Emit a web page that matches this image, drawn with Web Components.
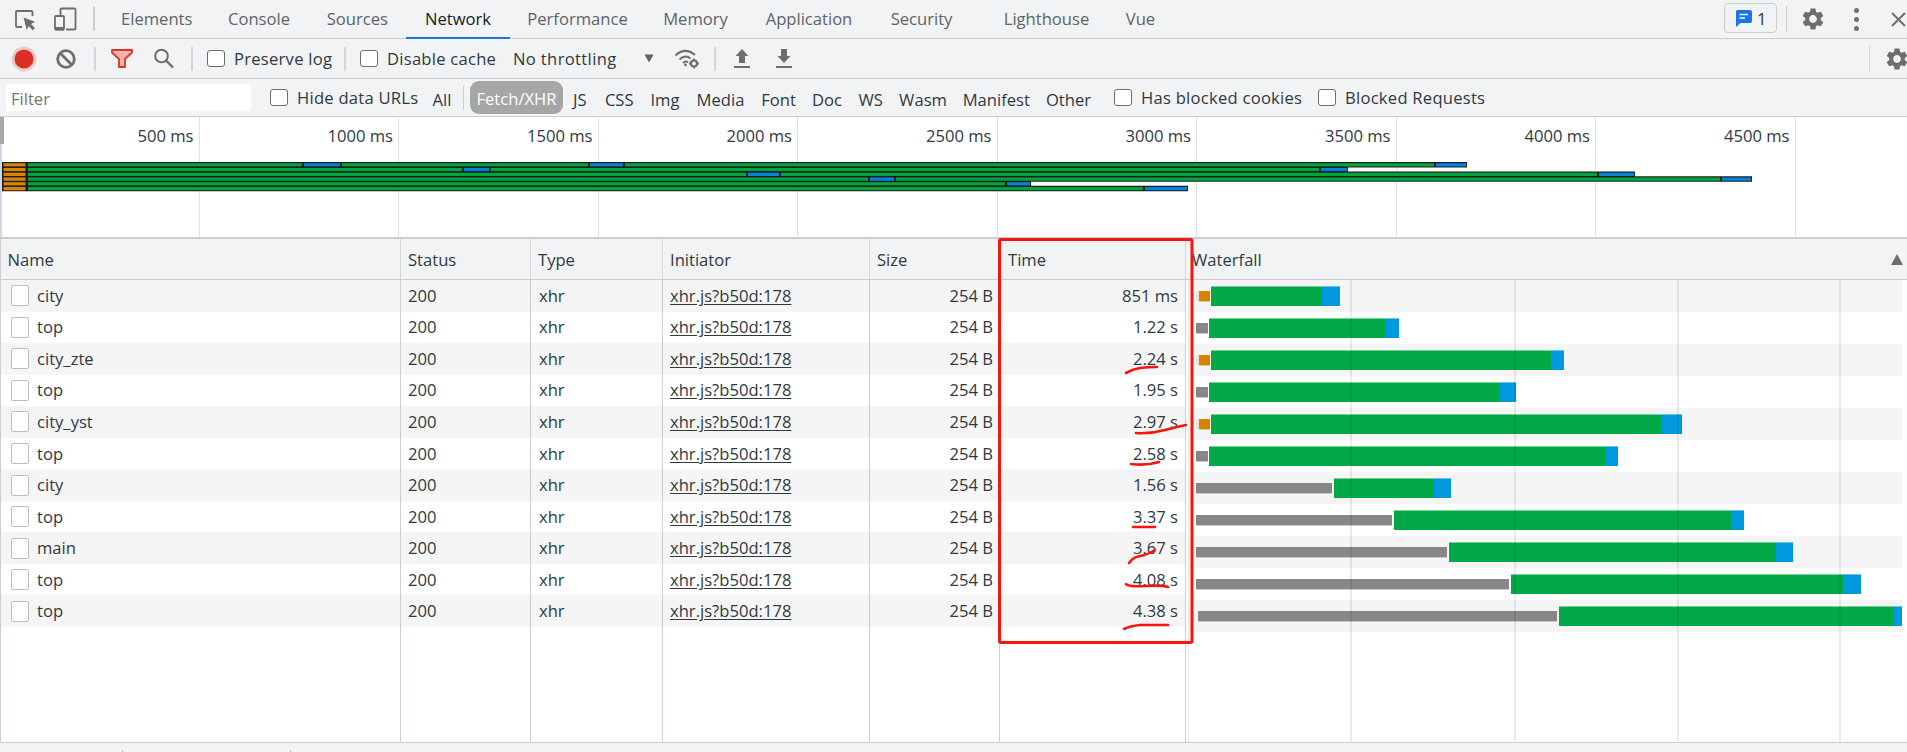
<!DOCTYPE html>
<html lang="en">
<head>
<meta charset="utf-8">
<title>Network</title>
<style>
  html, body { margin:0; height:100%; }
  body {
    width:1907px; height:752px; overflow:hidden; position:relative; background:#fff;
    display:flex; flex-direction:column;
    font-family:"Open Sans", "Noto Sans", Arial, sans-serif; font-size:16.6px; color:#303942;
  }
</style>
</head>
<body>
<dt-tabbar></dt-tabbar>
<dt-toolbar></dt-toolbar>
<dt-filterbar></dt-filterbar>
<dt-overview></dt-overview>
<net-table></net-table>
<dt-statusbar></dt-statusbar>
<dt-annotations></dt-annotations>

<script>
const GEAR = `<svg width="26" height="26" viewBox="0 0 24 24" fill="#6e6e6e"><path fill-rule="evenodd" d="M19.14 12.94c.04-.3.06-.61.06-.94 0-.32-.02-.64-.07-.94l2.03-1.58a.49.49 0 0 0 .12-.61l-1.92-3.32a.488.488 0 0 0-.59-.22l-2.39.96c-.5-.38-1.03-.7-1.62-.94l-.36-2.54a.484.484 0 0 0-.48-.41h-3.84c-.24 0-.43.17-.47.41l-.36 2.54c-.59.24-1.13.57-1.62.94l-2.39-.96c-.22-.08-.47 0-.59.22L2.74 8.87c-.12.21-.08.47.12.61l2.03 1.58c-.05.3-.09.63-.09.94s.02.64.07.94l-2.03 1.58a.49.49 0 0 0-.12.61l1.92 3.32c.12.22.37.29.59.22l2.39-.96c.5.38 1.03.7 1.62.94l.36 2.54c.05.24.24.41.48.41h3.84c.24 0 .44-.17.47-.41l.36-2.54c.59-.24 1.13-.56 1.62-.94l2.39.96c.22.08.47 0 .59-.22l1.92-3.32c.12-.22.07-.47-.12-.61l-2.01-1.58zM12 15.6c-1.98 0-3.6-1.62-3.6-3.6s1.62-3.6 3.6-3.6 3.6 1.62 3.6 3.6-1.62 3.6-3.6 3.6z"/></svg>`;

class DtCheck extends HTMLElement {
  constructor() {
    super();
    this.attachShadow({ mode: "open" }).innerHTML = `
      <style>
        :host { display:flex; align-items:center; gap:9.5px; white-space:nowrap; letter-spacing:.25px; }
        .box { width:15.5px; height:15.5px; border:1.5px solid #6e6e6e; border-radius:3px; background:#fff; flex:none; }
      </style>
      <span class="box"></span><slot></slot>`;
  }
}

class DtTabbar extends HTMLElement {
  constructor() {
    super();
    const tabs = [["Elements",105.5],["Console",99],["Sources",97.5],["Network",104],["Performance",135],["Memory",101],["Application",126],["Security",99],["Lighthouse",123,14],["Vue",65]];
    this.attachShadow({ mode: "open" }).innerHTML = `
      <style>
        :host { display:flex; align-items:stretch; height:38px; background:#f1f3f4; border-bottom:1px solid #cacdd1; flex:none; color:#5f6368; }
        .ic { display:block; flex:none; align-self:center; }
        .sep { width:2px; height:24px; background:#cacdd1; align-self:center; flex:none; }
        .tab { display:flex; align-items:center; justify-content:center; flex:none; box-sizing:border-box; height:38px; padding-bottom:2px; white-space:nowrap; }
        .tab.on { color:#202124; border-bottom:2px solid #1a73e8; height:39px; padding-bottom:1px; }
        .badge { margin-left:auto; align-self:center; margin-top:-2px; width:53px; height:30px; box-sizing:border-box; border:1px solid #cacdd1; border-radius:4px; display:flex; align-items:center; gap:5px; padding-left:10px; }
        .dots { width:5px; display:flex; flex-direction:column; gap:4px; margin-left:28px; align-self:center; }
        .dots i { width:5px; height:5px; border-radius:50%; background:#6e6e6e; }
      </style>
      <svg class="ic" style="margin-left:13px" width="24" height="26" viewBox="13 5 24 26">
        <path d="M22 26H17Q16 26 16 25V11Q16 10 17 10H31.5Q32.5 10 32.5 11V15" fill="none" stroke="#6e6e6e" stroke-width="1.8"/>
        <path d="M23.5 16.5L35 20.8L31 23L35 27.3L32.6 29.3L28.8 25L26.8 29Z" fill="#6e6e6e"/>
      </svg>
      <svg class="ic" style="margin-left:15px" width="26" height="26" viewBox="52 5 26 26">
        <path d="M60.5 14V8.5Q60.5 7.5 61.5 7.5H74.5Q75.5 7.5 75.5 8.5V27.5Q75.5 28.5 74.5 28.5H66" fill="none" stroke="#6e6e6e" stroke-width="1.8"/>
        <rect x="55" y="15" width="9" height="13.5" rx="1" fill="none" stroke="#6e6e6e" stroke-width="1.8"/>
        <rect x="55" y="26" width="9" height="3.4" fill="#6e6e6e"/>
      </svg>
      <span class="sep" style="margin-left:15px"></span>
      <span style="width:9px;flex:none"></span>
      ${tabs.map(([t, w, m]) => `<div class="tab ${t === "Network" ? "on" : ""}" style="width:${w}px;${m ? `margin-left:${m}px` : ""}">${t}</div>`).join("")}
      <div class="badge">
        <svg width="17" height="17" viewBox="0 0 17 17"><path d="M2.5 0H15Q17 0 17 2V11Q17 13 15 13H5.5L1 17V2Q1 0 2.5 0Z" fill="#1a73e8"/><path d="M4.5 4.5H13M4.5 8H10" stroke="#fff" stroke-width="1.6"/></svg>
        <span style="color:#303942">1</span>
      </div>
      <span class="sep" style="margin-left:9px;height:26px;width:1px"></span>
      <span class="ic" style="margin-left:13px;height:26px">${GEAR}</span>
      <div class="dots"><i></i><i></i><i></i></div>
      <svg class="ic" style="margin-left:32px;margin-right:1px" width="15" height="15" viewBox="0 0 15 15"><path d="M1 1L14 14M14 1L1 14" stroke="#6e6e6e" stroke-width="2"/></svg>`;
  }
}

class DtToolbar extends HTMLElement {
  constructor() {
    super();
    this.attachShadow({ mode: "open" }).innerHTML = `
      <style>
        :host { display:flex; align-items:center; height:39px; background:#f1f3f4; border-bottom:1px solid #cacdd1; flex:none; white-space:nowrap; }
        .btn { display:flex; align-items:center; justify-content:center; flex:none; height:39px; }
        .sep { width:2px; height:24px; background:#d3d6da; flex:none; }
      </style>
      <div class="btn" style="width:42px;margin-left:3px">
        <svg width="26" height="26" viewBox="0 0 26 26"><circle cx="13" cy="13" r="12.5" fill="#dc2f26" opacity=".2"/><circle cx="13" cy="13" r="9.5" fill="#dc2f26"/></svg>
      </div>
      <div class="btn" style="width:42px">
        <svg width="22" height="22" viewBox="0 0 22 22"><circle cx="11" cy="11" r="8.3" fill="none" stroke="#6e6e6e" stroke-width="2.8"/><path d="M5 5L17 17" stroke="#6e6e6e" stroke-width="2.8"/></svg>
      </div>
      <span class="sep" style="margin-left:7px"></span>
      <div class="btn" style="width:41px;margin-left:5px">
        <svg width="22" height="19" viewBox="0 0 22 19"><path d="M1 1H21V3.5L14 10V18H8V10L1 3.5Z" fill="#f0b3ae" stroke="#e53329" stroke-width="1.9" stroke-linejoin="round"/></svg>
      </div>
      <div class="btn" style="width:42px">
        <svg width="23" height="23" viewBox="0 0 23 23"><circle cx="9.5" cy="9" r="6.3" fill="none" stroke="#6e6e6e" stroke-width="2"/><path d="M14 13.5L21 20.5" stroke="#6e6e6e" stroke-width="2.4"/></svg>
      </div>
      <span class="sep" style="margin-left:7px"></span>
      <dt-check style="margin-left:14px;width:137px">Preserve log</dt-check>
      <span class="sep"></span>
      <dt-check style="margin-left:14px;width:152px">Disable cache</dt-check>
      <div style="width:131px;margin-left:1px;flex:none;letter-spacing:.35px">No throttling</div>
      <svg width="10" height="9" viewBox="0 0 10 9" style="flex:none"><path d="M0.5 0.5H9.5L5 8.5Z" fill="#5f6368"/></svg>
      <div class="btn" style="width:44px;margin-left:11px">
        <svg width="26" height="22" viewBox="0 0 26 22" fill="none" stroke="#6e6e6e" stroke-width="2">
          <path d="M1.5 7.5Q11 -1.5 21 7"/><path d="M5.5 11.5Q11 6 16.5 10.5"/><path d="M9 15Q11.5 12.5 14 14.3"/>
          <circle cx="11.5" cy="17" r="1.4" fill="#6e6e6e" stroke="none"/>
          <circle cx="20" cy="15.5" r="3" stroke-width="2.2"/>
          <path d="M20 10.5V12M20 19V20.5M15 15.5H16.5M23.5 15.5H25" stroke-width="2"/>
        </svg>
      </div>
      <span class="sep" style="margin-left:5px"></span>
      <div class="btn" style="width:52px">
        <svg width="16" height="19" viewBox="0 0 16 19"><path d="M8 0L14.5 7H11V14H5V7H1.5Z" fill="#6e6e6e"/><rect x="0" y="17" width="16" height="2" fill="#6e6e6e"/></svg>
      </div>
      <div class="btn" style="width:32px">
        <svg width="16" height="19" viewBox="0 0 16 19"><path d="M8 14L14.5 7H11V0H5V7H1.5Z" fill="#6e6e6e"/><rect x="0" y="17" width="16" height="2" fill="#6e6e6e"/></svg>
      </div>
      <span class="sep" style="margin-left:auto;width:1px;height:26px"></span>
      <span style="margin-left:14px;height:26px;margin-right:-3px;flex:none">${GEAR}</span>`;
  }
}

class DtFilterbar extends HTMLElement {
  constructor() {
    super();
    const types = [["JS",33.5],["CSS",45.5],["Img",46],["Media",65],["Font",51],["Doc",46],["WS",41.5],["Wasm",63],["Manifest",83.5],["Other",61]];
    this.attachShadow({ mode: "open" }).innerHTML = `
      <style>
        :host { display:flex; align-items:center; height:37px; background:#f1f3f4; border-bottom:1px solid #cacdd1; flex:none; white-space:nowrap; }
        .input { width:245px; height:27px; margin-left:6px; background:#fff; color:#757575; display:flex; align-items:center; padding:2px 0 0 5px; box-sizing:border-box; flex:none; }
        .type { text-align:center; flex:none; padding-top:3px; }
        .pill { width:93px; height:33px; line-height:35px; background:#a6a6a6; color:#fff; border-radius:9px; text-align:center; flex:none; margin-left:6px; }
        .sep { width:1px; height:24px; background:#cacdd1; margin-left:7px; flex:none; }
      </style>
      <div class="input">Filter</div>
      <dt-check style="margin-left:19px;width:158px">Hide data URLs</dt-check>
      <div class="type" style="width:28px">All</div>
      <span class="sep"></span>
      <div class="pill">Fetch/XHR</div>
      ${types.map(([t, w]) => `<div class="type" style="width:${w}px">${t}</div>`).join("")}
      <dt-check style="margin-left:15px;width:204px">Has blocked cookies</dt-check>
      <dt-check>Blocked Requests</dt-check>`;
  }
}

// row, then [colour, end x] in page pixels
const OVERVIEW = [
  [["g",303],["b",341],["g",589],["b",624],["g",1435],["b",1467]],
  [["g",463],["b",490],["g",1320],["b",1348]],
  [["g",747],["b",780],["g",1598],["b",1635]],
  [["g",869],["b",895],["g",1721],["b",1752]],
  [["g",1006],["b",1031]],
  [["g",1144],["b",1188]],
];

class DtOverview extends HTMLElement {
  constructor() {
    super();
    const cols = { g:"#00a540", b:"#0084dc", o:"#d98300" };
    let bars = "";
    OVERVIEW.forEach((row, i) => {
      const y = 45 + i * 4.75;
      const end = row[row.length - 1][1];
      bars += `<rect x="2" y="${y}" width="${end - 2}" height="5.5" fill="#1c1c1c"/>`;
      let x = 27;
      bars += `<rect x="3.5" y="${y + 1.2}" width="22" height="3.3" fill="${cols.o}"/>`;
      row.forEach(([c, e]) => {
        bars += `<rect x="${x + 1}" y="${y + 1.2}" width="${e - x - 2}" height="3.3" fill="${cols[c]}"/>`;
        x = e;
      });
    });
    const marks = [500,1000,1500,2000,2500,3000,3500,4000,4500];
    this.attachShadow({ mode: "open" }).innerHTML = `
      <style>
        :host { display:flex; position:relative; height:120px; background:#fff; border-bottom:2px solid #cacdd1; flex:none; box-sizing:content-box; }
        .mark { width:199.5px; flex:none; box-sizing:border-box; border-right:1px solid #e0e0e0; text-align:right; padding-right:5px; line-height:38px; white-space:nowrap; color:#303942; }
        svg { position:absolute; left:0; top:0; }
        .edge { position:absolute; left:0; top:0; width:4px; height:27px; background:#a9a9a9; }
        .side { position:absolute; left:0; top:27px; width:2px; bottom:0; background:#cdd8ec; }
      </style>
      ${marks.map(m => `<div class="mark">${m} ms</div>`).join("")}
      <span class="edge"></span><span class="side"></span>
      <svg width="1907" height="120" viewBox="0 0 1907 120">${bars}</svg>`;
  }
}

const COLS = "401px 130px 132px 207px 130px 186px";

class NetRow extends HTMLElement {
  constructor() {
    super();
    const filler = this.hasAttribute("filler");
    const a = n => this.getAttribute(n) || "";
    this.attachShadow({ mode: "open" }).innerHTML = `
      <style>
        :host { display:grid; grid-template-columns:${COLS}; height:31.55px; background:#fff; white-space:nowrap; }
        :host([stripe]) { background:#f5f5f5; }
        :host([filler]) { height:auto; flex:1; }
        div { box-sizing:border-box; border-right:1px solid #cacdd1; padding:0 7px 1px; display:flex; align-items:center; }
        .name { border-left:1.5px solid #cacdd1; padding-left:10px; padding-bottom:0; gap:8px; }
        .doc { width:18px; height:21px; box-sizing:border-box; background:#fff; border:1.5px solid #bdbdbd; border-radius:2px; flex:none; }
        .name span + * { margin-top:-1px; }
        .r { justify-content:flex-end; }
        .size { padding-right:6px; }
        .time { padding-right:7px; }
        u { text-underline-offset:2px; }
      </style>
      <div class="name">${filler ? "" : `<span class="doc"></span><b style="font-weight:400">${a("name")}</b>`}</div>
      <div>${filler ? "" : "200"}</div>
      <div style="padding-left:8px">${filler ? "" : "xhr"}</div>
      <div>${filler ? "" : "<u>xhr.js?b50d:178</u>"}</div>
      <div class="r size">${filler ? "" : "254 B"}</div>
      <div class="r time">${a("time")}</div>`;
  }
}

// [kind, start, end] in page pixels
const WATERFALL = [
  [["l",1196,1199],["o",1199,1210],["g",1211,1322],["b",1322,1340]],
  [["s",1196,1208],["g",1209,1385],["b",1385,1399]],
  [["l",1196,1199],["o",1199,1210],["g",1211,1551],["b",1551,1564]],
  [["s",1196,1208],["g",1209,1500],["b",1500,1516]],
  [["l",1196,1199],["o",1199,1210],["g",1211,1662],["b",1662,1682]],
  [["s",1196,1208],["g",1209,1605],["b",1605,1618]],
  [["s",1196,1332],["g",1334,1434],["b",1434,1451]],
  [["s",1196,1392],["g",1394,1731],["b",1731,1744]],
  [["s",1196,1447],["g",1449,1776],["b",1776,1793]],
  [["s",1196,1509],["g",1511,1843],["b",1843,1861]],
  [["s",1198,1557],["g",1559,1893],["b",1893,1902]],
];

class NetWaterfall extends HTMLElement {
  constructor() {
    super();
    const X0 = 1189;
    const rows = WATERFALL.map((segs, i) => {
      let x = X0;
      const html = segs.map(([k, s, e]) => {
        const seg = `<i class="${k}" style="margin-left:${s - x}px;width:${e - s}px"></i>`;
        x = e;
        return seg;
      }).join("");
      return `<div class="row ${i % 2 ? "" : "stripe"}">${html}</div>`;
    }).join("");
    this.attachShadow({ mode: "open" }).innerHTML = `
      <style>
        :host { display:block; position:relative; flex:1; overflow:hidden; margin-left:2px; border-left:1px solid #e8e8e8; margin-right:5px; }
        .row { height:32px; display:flex; align-items:center; }
        .stripe { background:#f5f5f5; }
        i { display:block; flex:none; }
        .g { height:20px; background:#00a846; box-shadow:inset 0 1px 0 #7fcf9f; }
        .b { height:20px; background:#0099e0; box-shadow:inset 0 1px 0 #5cc4ff; }
        .o { height:10px; background:#d98300; box-shadow:0 1px 0 #e6c48f; }
        .s { height:10px; background:#878787; box-shadow:0 1px 0 #c8c8c8; }
        .l { height:10px; background:#e6e6e6; }
        .grid { position:absolute; top:0; bottom:0; width:2px; background:rgba(0,0,0,.08); }
      </style>
      ${rows}
      ${[1350,1514,1677,1839].map(x => `<span class="grid" style="left:${x - X0}px"></span>`).join("")}`;
  }
}

class NetTable extends HTMLElement {
  constructor() {
    super();
    const data = [["city","851 ms"],["top","1.22 s"],["city_zte","2.24 s"],["top","1.95 s"],["city_yst","2.97 s"],["top","2.58 s"],["city","1.56 s"],["top","3.37 s"],["main","3.67 s"],["top","4.08 s"],["top","4.38 s"]];
    const heads = ["Name","Status","Type","Initiator","Size","Time"];
    this.attachShadow({ mode: "open" }).innerHTML = `
      <style>
        :host { display:flex; flex-direction:column; flex:1; min-height:0; }
        .head { display:grid; grid-template-columns:${COLS} 1fr; height:40px; background:#f1f3f4; border-bottom:1px solid #cacdd1; flex:none; }
        .head div { box-sizing:border-box; border-right:1px solid #d5d8db; padding:0 7px; display:flex; align-items:center; white-space:nowrap; }
        .head div:first-child { border-left:1.5px solid #cacdd1; padding-left:6.5px; }
        .head div:nth-child(6) { padding-left:8px; }
        .head .wf { border:0; padding:0 0 0 6px; justify-content:space-between; }
        .head svg { margin-right:4px; }
        .body { display:flex; flex:1; min-height:0; }
        .rows { width:1186px; flex:none; display:flex; flex-direction:column; }
      </style>
      <div class="head">
        ${heads.map(h => `<div>${h}</div>`).join("")}
        <div class="wf">Waterfall<svg width="12" height="11" viewBox="0 0 12 11"><path d="M6 0L12 11H0Z" fill="#6e6e6e"/></svg></div>
      </div>
      <div class="body">
        <div class="rows">
          ${data.map(([n, t], i) => `<net-row name="${n}" time="${t}" ${i % 2 ? "" : "stripe"}></net-row>`).join("")}
          <net-row filler></net-row>
        </div>
        <net-waterfall></net-waterfall>
      </div>`;
  }
}

class DtStatusbar extends HTMLElement {
  constructor() {
    super();
    this.attachShadow({ mode: "open" }).innerHTML = `
      <style>
        :host { display:flex; height:9px; flex:none; background:#f1f3f4; border-top:1px solid #cacdd1; align-items:flex-end; }
        i { width:1px; height:2px; background:#b5b5b5; flex:none; }
      </style>
      <i style="margin-left:122px"></i><i style="margin-left:167px"></i>`;
  }
}

// the hand-drawn red marks on top of the screenshot
class DtAnnotations extends HTMLElement {
  constructor() {
    super();
    this.attachShadow({ mode: "open" }).innerHTML = `
      <style>
        :host { position:absolute; left:0; top:0; width:1907px; height:752px; pointer-events:none; }
        svg { display:block; }
      </style>
      <svg width="1907" height="752" viewBox="0 0 1907 752" fill="none" stroke="#f8150d" stroke-linecap="round" stroke-linejoin="round">
        <rect x="999.5" y="239.5" width="192.5" height="403" rx="1.5" stroke-width="3"/>
        <g stroke-width="2.6">
          <path d="M1126 373Q1133 369 1140 368T1157 367"/>
          <path d="M1136 433Q1150 434 1165 430T1186 425"/>
          <path d="M1131 464Q1146 466 1159 462"/>
          <path d="M1133 527H1155"/>
          <path d="M1129 563Q1133 557 1140 556T1155 550"/>
          <path d="M1126 584Q1128 587 1145 586T1168 587"/>
          <path d="M1124 629Q1130 626 1140 625H1168"/>
        </g>
      </svg>`;
  }
}

customElements.define("dt-check", DtCheck);
customElements.define("dt-tabbar", DtTabbar);
customElements.define("dt-toolbar", DtToolbar);
customElements.define("dt-filterbar", DtFilterbar);
customElements.define("dt-overview", DtOverview);
customElements.define("net-row", NetRow);
customElements.define("net-waterfall", NetWaterfall);
customElements.define("net-table", NetTable);
customElements.define("dt-statusbar", DtStatusbar);
customElements.define("dt-annotations", DtAnnotations);
</script>
</body>
</html>
